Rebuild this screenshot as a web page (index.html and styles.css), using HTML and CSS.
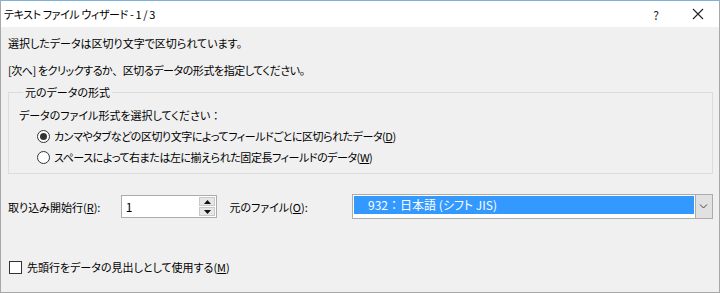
FILE: index.html
```html
<!DOCTYPE html>
<html lang="ja">
<head>
  <meta charset="UTF-8" />
  <title>テキスト ファイル ウィザード - 1 / 3</title>
  <link rel="stylesheet" href="styles.css">
</head>
<body>
  <div class="window">
    <div class="titlebar">
      <span class="title">テキスト ファイル ウィザード - 1 / 3</span>
      <span class="help">?</span>
      <span class="close">
        <svg width="12" height="12" viewBox="0 0 12 12"><path d="M1 1L11 11M11 1L1 11" stroke="#222" stroke-width="1.1" fill="none"/></svg>
      </span>
    </div>

    <div class="content">
      <p class="line">選択したデータは区切り文字で区切られています。</p>
      <p class="line second tight">[次へ] をクリックするか<span class="full">、</span>区切るデータの形式を指定してください。</p>

      <fieldset class="group">
        <legend>元のデータの形式</legend>
        <p class="line">データのファイル形式を選択してください<span class="full">：</span></p>
        <label class="radio-row tight">
          <span class="radio checked"></span>
          カンマやタブなどの区切り文字によってフィールドごとに区切られたデータ(<u>D</u>)
        </label>
        <label class="radio-row tight">
          <span class="radio"></span>
          スペースによって右または左に揃えられた固定長フィールドのデータ(<u>W</u>)
        </label>
      </fieldset>

      <div class="options">
        <span class="label start">取り込み開始行(<u>R</u>):</span>
        <div class="spin">
          <span class="spin-value">1</span>
          <div class="spin-buttons">
            <span class="spin-btn"><svg width="7" height="4" viewBox="0 0 7 4"><path d="M3.5 0L7 4H0Z" fill="#111"/></svg></span>
            <span class="spin-btn"><svg width="7" height="4" viewBox="0 0 7 4"><path d="M0 0H7L3.5 4Z" fill="#111"/></svg></span>
          </div>
        </div>
        <span class="label origin">元のファイル(<u>O</u>):</span>
        <div class="combo">
          <div class="combo-field">
            <span class="combo-selected">932<span class="full">：</span>日本語 (シフト JIS)</span>
          </div>
          <span class="combo-btn">
            <svg width="9" height="5" viewBox="0 0 9 5"><path d="M1 0.5L4.5 4L8 0.5" stroke="#444" fill="none"/></svg>
          </span>
        </div>
      </div>

      <label class="check-row">
        <span class="checkbox"></span>
        先頭行をデータの見出しとして使用する(<u>M</u>)
      </label>
    </div>
  </div>
</body>
</html>
```

FILE: styles.css
```css
* {
  box-sizing: border-box;
}

body {
  margin: 0;
  font-family: "Noto Sans CJK JP", "Noto Sans", sans-serif;
  font-feature-settings: "palt";
  font-size: 11px;
  color: #000;
  background: #f0f0f0;
}

/* full-width punctuation keeps its em box */
.full {
  font-feature-settings: normal;
}
.tight {
  letter-spacing: -0.45px;
}

.window {
  width: 720px;
  height: 293px;
  border: 1px solid #a8a8a8;
  border-top-color: #7cb3dc;
  background: #f0f0f0;
  display: flex;
  flex-direction: column;
}

.titlebar {
  height: 26px;
  background: #fff;
  display: flex;
  align-items: center;
  padding-left: 3px;
}
.title {
  flex: 1;
  letter-spacing: -0.4px;
}
.help {
  width: 18px;
  text-align: center;
  font-size: 12px;
  color: #222;
  margin-right: 27px;
}
.close {
  width: 12px;
  height: 12px;
  display: flex;
  margin-right: 15px;
}

.content {
  padding: 6px 6px 0 7px;
}

.line {
  margin: 0;
  line-height: 20px;
}
.line.second {
  margin-top: 7px;
}

.group {
  margin: 2px 0 0 0;
  padding: 3px 10px 6px 10px;
  border: 1px solid #dcdcdc;
  min-width: 0;
}
.group legend {
  padding: 0 2px;
  margin-left: 4px;
  line-height: 20px;
}

.radio-row {
  display: flex;
  align-items: center;
  height: 20px;
  margin-left: 18px;
  margin-top: 1px;
}
.radio {
  width: 13px;
  height: 13px;
  border: 1px solid #333;
  border-radius: 50%;
  background: #fff;
  margin-right: 4px;
  display: flex;
  align-items: center;
  justify-content: center;
}
.radio.checked::after {
  content: "";
  width: 7px;
  height: 7px;
  border-radius: 50%;
  background: #333;
}

.options {
  display: flex;
  align-items: center;
  margin-top: 20px;
  height: 25px;
}
.label {
  line-height: 20px;
}
.label.start {
  width: 113px;
}
.label.origin {
  width: 123px;
  margin-left: 12px;
}

.spin {
  width: 97px;
  height: 23px;
  border: 1px solid #acacac;
  background: #fff;
  display: flex;
  align-items: center;
  justify-content: space-between;
}
.spin-value {
  padding-left: 4px;
  font-size: 12px;
}
.spin-buttons {
  display: flex;
  flex-direction: column;
  gap: 1px;
  height: 100%;
  padding: 1px 1px 1px 0;
}
.spin-btn {
  width: 16px;
  flex: 1;
  background: #e6e6e6;
  border: 1px solid #c8c8c8;
  display: flex;
  align-items: center;
  justify-content: center;
}

.combo {
  width: 362px;
  height: 25px;
  display: flex;
  border: 1px solid #acacac;
  background: #fff;
}
.combo-field {
  flex: 1;
  padding: 1px 1px 4px 1px;
}
.combo-selected {
  display: block;
  height: 18px;
  line-height: 18px;
  background: #3399ff;
  color: #fff;
  padding-left: 14px;
  font-size: 12px;
}
.combo-btn {
  width: 17px;
  background: #e1e1e1;
  border-left: 1px solid #acacac;
  display: flex;
  align-items: center;
  justify-content: center;
}

.check-row {
  display: flex;
  align-items: center;
  height: 20px;
  margin-top: 38px;
  margin-left: 1px;
}
.checkbox {
  width: 13px;
  height: 13px;
  border: 1px solid #333;
  background: #fff;
  margin-right: 5px;
}
```
